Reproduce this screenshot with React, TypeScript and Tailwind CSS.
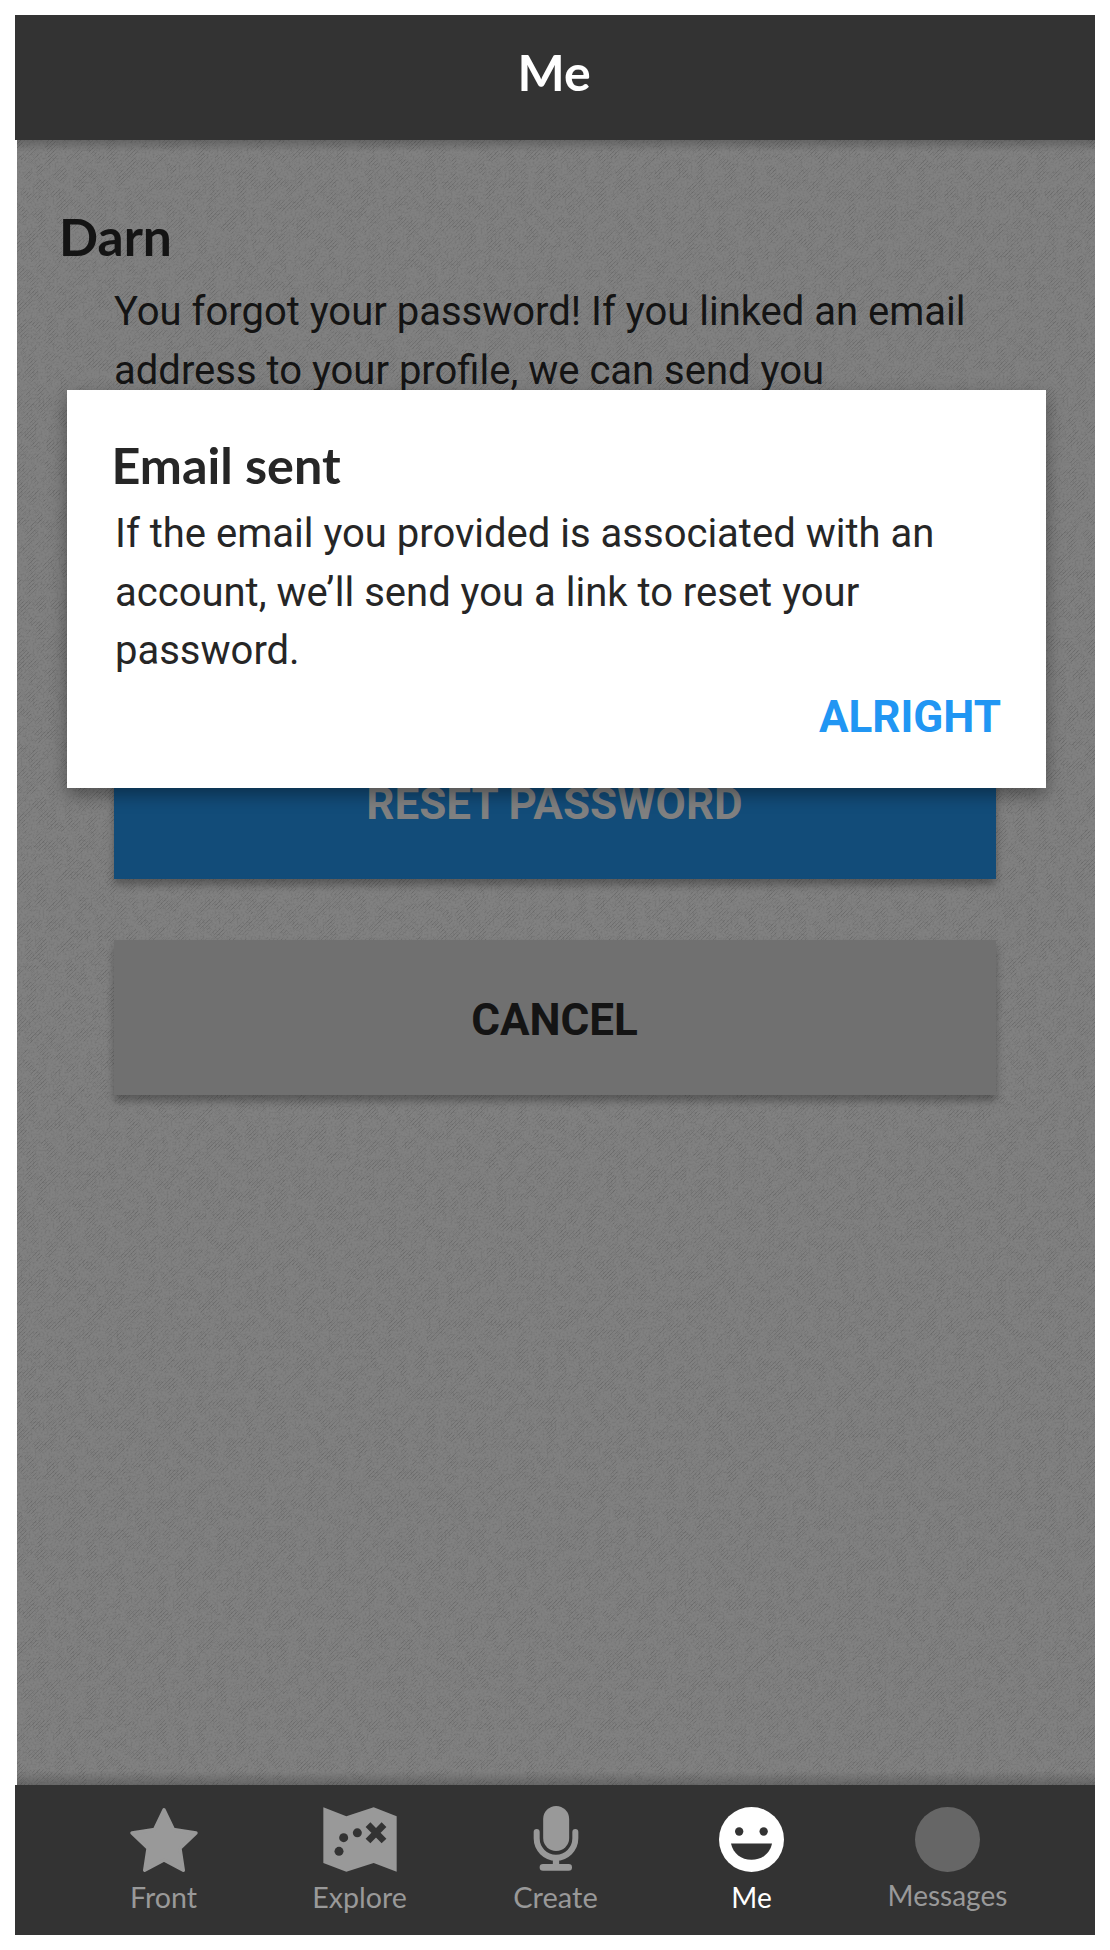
import type { ReactNode } from 'react';

function Texture() {
  return (
    <svg className="absolute inset-0 h-full w-full" aria-hidden="true">
      <defs>
        <pattern id="twill" width="4" height="4" patternUnits="userSpaceOnUse">
          <path d="M-1 1 L1 -1 M0 4 L4 0 M3 5 L5 3" stroke="#000000" strokeOpacity="0.12" strokeWidth="1" />
        </pattern>
        <filter id="patches" x="0" y="0" width="100%" height="100%" colorInterpolationFilters="sRGB">
          <feTurbulence type="fractalNoise" baseFrequency="0.1" numOctaves={2} seed={4} result="noise" />
          <feColorMatrix in="noise" values="0 0 0 0 0  0 0 0 0 0  0 0 0 0 0  5 0 0 0 -2.1" result="cover" />
          <feComposite in="SourceGraphic" in2="cover" operator="in" />
        </filter>
        <filter id="grain" x="0" y="0" width="100%" height="100%" colorInterpolationFilters="sRGB">
          <feTurbulence type="fractalNoise" baseFrequency="0.5" numOctaves={1} seed={9} />
          <feColorMatrix values="0 0 0 0 0  0 0 0 0 0  0 0 0 0 0  0.25 0 0 0 -0.11" />
        </filter>
      </defs>
      <rect width="1078" height="1645" fill="url(#twill)" filter="url(#patches)" />
      <rect width="1078" height="1645" filter="url(#grain)" />
    </svg>
  );
}

function StarIcon() {
  return (
    <svg className="h-[65px] w-[68px]" viewBox="59 111 204 195" fill="currentColor" stroke="currentColor">
      <path
        strokeWidth="10"
        strokeLinejoin="round"
        d="M161 119 L189 178 L257 189 L209 235 L219 301 L161 270 L103 301 L113 235 L65 189 L133 178Z"
      />
    </svg>
  );
}

function MapIcon() {
  return (
    <svg className="h-[65px] w-[74px]" viewBox="639 110 222 195">
      <path fill="currentColor" d="M640 111 L709 138 L791 111 L860 138 V304 L791 278 L709 304 L640 278Z" />
      <g fill="#333333">
        <circle cx="701" cy="202" r="13.5" />
        <circle cx="742" cy="187.500" r="13.5" />
        <circle cx="687" cy="243" r="13.5" />
      </g>
      <path stroke="#333333" strokeWidth="20" d="M774 163 L822 212 M822 163 L774 212" />
    </svg>
  );
}

function MicIcon() {
  return (
    <svg className="-mt-px mb-px h-[65px] w-[46px]" viewBox="158 108 138 195" fill="none">
      <rect x="188.500" y="108" width="78" height="135" rx="39" fill="currentColor" />
      <path d="M169 186 V205 A58 58 0 0 0 285 205 V186" stroke="currentColor" strokeWidth="18" strokeLinecap="round" />
      <path d="M227 262 V285" stroke="currentColor" strokeWidth="19" />
      <rect x="178" y="282" width="97" height="20.500" rx="10" fill="currentColor" />
    </svg>
  );
}

function SmileIcon() {
  return (
    <svg className="h-[65px] w-[65px]" viewBox="717 110.500 195 195">
      <circle cx="814.500" cy="208" r="97.500" fill="currentColor" />
      <g fill="#333333">
        <circle cx="777.500" cy="184" r="12.500" />
        <circle cx="851" cy="184" r="12.500" />
        <path d="M753 220 H876 C870 250 845 269 814.500 269 C784 269 759 250 753 220Z" />
      </g>
    </svg>
  );
}

function NavItem({ icon, label, className }: { icon: ReactNode; label: string; className: string }) {
  return (
    <a className={`flex w-[196px] flex-col items-center pt-[22px] ${className}`}>
      {icon}
      {label}
    </a>
  );
}

export default function App() {
  return (
    <div className="h-[1950px] w-[1110px] bg-white p-[15px] font-['Roboto',sans-serif]">
      <div className="relative flex h-[1920px] w-[1080px] flex-col">
        <header className="z-10 flex h-[125px] shrink-0 justify-center bg-[#333333] pt-[27px] pr-0.5 font-['Lato',sans-serif] text-[50px] leading-[61px] font-bold text-white">
          <h1>Me</h1>
        </header>

        <main className="relative ml-0.5 flex-1 overflow-hidden bg-[#818181] text-[#141414]">
          <Texture />
          <div className="relative flex h-full flex-col pt-[65px]">
            <h2 className="pl-[42px] font-['Lato',sans-serif] text-[51.5px] leading-[62px] font-bold">Darn</h2>
            <p className="mt-[15px] pl-[97px] text-[40px] leading-[59px]">
              You forgot your password! If you linked an email
              <br />
              address to your profile, we can send you
            </p>
            <button className="mt-[324px] ml-[97px] h-[155px] w-[882px] bg-[#124c79] pt-[5px] pr-px text-[44px] font-bold text-[#808080] shadow-[0_6px_8px_rgba(0,0,0,0.3)]">
              RESET PASSWORD
            </button>
            <button className="mt-[61px] ml-[97px] h-[155px] w-[882px] bg-[#707070] pt-[5px] pr-px text-[44px] font-bold shadow-[0_6px_8px_rgba(0,0,0,0.3)]">
              CANCEL
            </button>
          </div>
          <div className="absolute inset-x-0 top-0 h-3 bg-linear-to-b from-black/20 to-transparent" />
          <div className="absolute inset-x-0 bottom-0 h-3.5 bg-linear-to-t from-black/20 to-transparent" />
        </main>

        <nav className="z-10 flex h-[150px] shrink-0 bg-[#333333] pl-[50.500px] font-['Lato',sans-serif] leading-[50px] text-[#999999]">
          <NavItem icon={<StarIcon />} label="Front" className="text-[28.6px]" />
          <NavItem icon={<MapIcon />} label="Explore" className="text-[28.6px]" />
          <NavItem icon={<MicIcon />} label="Create" className="text-[29px] leading-[50px]" />
          <NavItem icon={<SmileIcon />} label="Me" className="text-[28px] text-white" />
          <NavItem
            icon={<span className="h-[65px] w-[65px] rounded-full bg-[#666666]" />}
            label="Messages"
            className="text-[28px] leading-[47px]"
          />
        </nav>

        <section
          role="dialog"
          className="absolute top-[375px] left-[52px] z-20 flex h-[398px] w-[979px] flex-col bg-white pt-[45px] text-[#262626] shadow-[0_7px_16px_rgba(0,0,0,0.36)]"
        >
          <h2 className="pl-[44.500px] font-['Lato',sans-serif] text-[50.3px] leading-[60px] font-bold">Email sent</h2>
          <p className="mt-[10px] pl-[48px] text-[40px] leading-[58.67px]">
            If the email you provided is associated with an
            <br />
            account, we’ll send you a link to reset your
            <br />
            password.
          </p>
          <button className="mt-[10px] mr-[45px] self-end text-[44px] leading-[52px] font-bold text-[#2196f3]">
            ALRIGHT
          </button>
        </section>
      </div>
    </div>
  );
}
